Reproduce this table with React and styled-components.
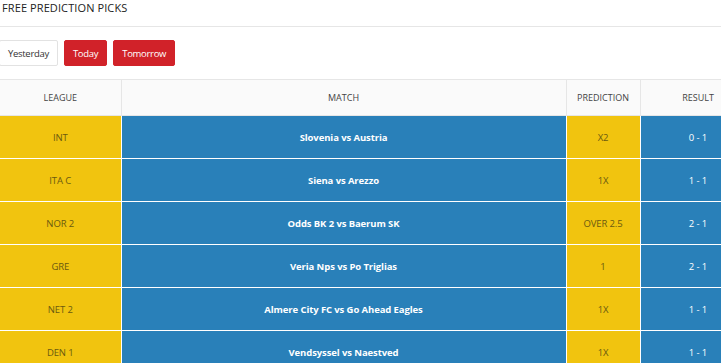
import React from "react";
import styled, { createGlobalStyle } from "styled-components";

const GlobalStyle = createGlobalStyle`
  body {
    margin: 0;
    overflow: hidden;
    background: #fff;
    font-family: "Open Sans", "Noto Sans", sans-serif;
  }
`;

const picks = [
  { league: "INT", match: "Slovenia vs Austria", tip: "X2", result: "0 - 1" },
  { league: "ITA C", match: "Siena vs Arezzo", tip: "1X", result: "1 - 1" },
  { league: "NOR 2", match: "Odds BK 2 vs Baerum SK", tip: "OVER 2.5", result: "2 - 1" },
  { league: "GRE", match: "Veria Nps vs Po Triglias", tip: "1", result: "2 - 1" },
  { league: "NET 2", match: "Almere City FC vs Go Ahead Eagles", tip: "1X", result: "1 - 1" },
  { league: "DEN 1", match: "Vendsyssel vs Naestved", tip: "1X", result: "1 - 1" },
];

const App = () => {
  return (
    <Page>
      <GlobalStyle />
      <TitleBar>
        <Title>FREE PREDICTION PICKS</Title>
      </TitleBar>
      <DayTabs>
        <DayButton>Yesterday</DayButton>
        <DayButton active>Today</DayButton>
        <DayButton active>Tomorrow</DayButton>
      </DayTabs>
      <PicksTable>
        <colgroup>
          <col style={{ width: 121 }} />
          <col style={{ width: 445 }} />
          <col style={{ width: 74 }} />
          <col style={{ width: 116 }} />
        </colgroup>
        <thead>
          <tr>
            <HeadCell>League</HeadCell>
            <HeadCell>Match</HeadCell>
            <HeadCell>Prediction</HeadCell>
            <HeadCell>Result</HeadCell>
          </tr>
        </thead>
        <tbody>
          {picks.map((p) => (
            <tr key={p.match}>
              <Cell tone="yellow">{p.league}</Cell>
              <Cell tone="blue" bold>{p.match}</Cell>
              <Cell tone="yellow">{p.tip}</Cell>
              <Cell tone="blue">{p.result}</Cell>
            </tr>
          ))}
        </tbody>
      </PicksTable>
    </Page>
  );
};

export default App;

const Page = styled.div`
  width: 756px;
`;

const TitleBar = styled.div`
  height: 27px;
  border-bottom: 1px solid #e6e6e6;
  padding-left: 2px;
  box-sizing: border-box;
`;

const Title = styled.h2`
  margin: 0;
  font-size: 11px;
  font-weight: 400;
  line-height: 16px;
  color: #222;
  letter-spacing: 0.1px;
`;

const DayTabs = styled.div`
  display: flex;
  gap: 6px;
  padding: 13px 0;
  & > :first-child {
    margin-left: -1px;
  }
`;

const DayButton = styled.button`
  height: 26px;
  padding: 0 8px;
  border-radius: 2px;
  border: 1px solid ${(p) => (p.active ? "#d12229" : "#e2e2e2")};
  background: ${(p) => (p.active ? "#d12229" : "#fff")};
  color: ${(p) => (p.active ? "#fff" : "#333")};
  font-family: "Open Sans", sans-serif;
  font-size: 9.5px;
  letter-spacing: -0.3px;
  cursor: pointer;
`;

const PicksTable = styled.table`
  border-collapse: collapse;
  table-layout: fixed;
  width: 756px;
  border-top: 1px solid #e6e6e6;
`;

const HeadCell = styled.th`
  height: 35px;
  padding: 0;
  background: #fafafa;
  border-right: 1px solid #e6e6e6;
  border-bottom: 1px solid #e6e6e6;
  font-size: 9px;
  font-weight: 400;
  text-transform: uppercase;
  color: #444;
  text-align: center;
`;

const Cell = styled.td`
  height: 42px;
  padding: 0;
  text-align: center;
  font-size: 9.5px;
  font-weight: ${(p) => (p.bold ? 700 : 400)};
  background: ${(p) => (p.tone === "yellow" ? "#f1c40f" : "#2980b9")};
  color: ${(p) => (p.tone === "yellow" ? "#6b5a10" : "#fff")};
  border-right: 1px solid #fff;
  border-bottom: 1px solid #fff;
  letter-spacing: -0.1px;
`;
